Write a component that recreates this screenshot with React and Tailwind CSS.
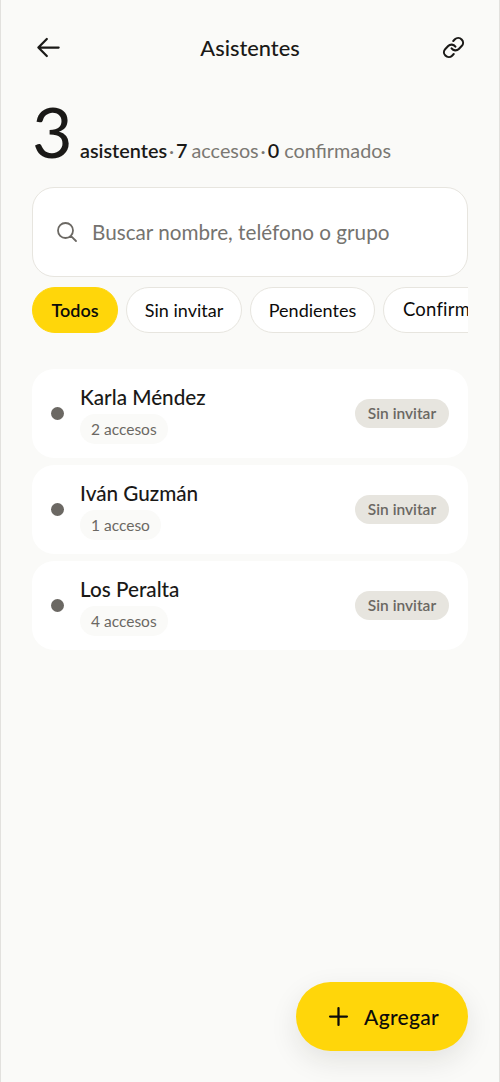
import { useState } from 'react';
import { Link } from 'lucide-react';
import { HiOutlineArrowLeft, HiOutlineMagnifyingGlass, HiOutlinePlus } from 'react-icons/hi2';

const filters = [
    { label: 'Todos', className: 'w-[86px] text-[18px]' },
    { label: 'Sin invitar', className: 'w-[116px] text-[18px]' },
    { label: 'Pendientes', className: 'w-[125px] text-[18px]' },
    { label: 'Confirmados', className: 'px-[19px] text-[18.5px] tracking-[0.2px]' },
];

const guests = [
    { id: 1, name: 'Karla Méndez', accesos: 2, status: 'Sin invitar' },
    { id: 2, name: 'Iván Guzmán', accesos: 1, status: 'Sin invitar' },
    { id: 3, name: 'Los Peralta', accesos: 4, status: 'Sin invitar' },
];

const GuestCard = ({ guest }) => (
    <li className="flex h-[89px] items-center rounded-[22px] bg-white px-[19px]">
        <span className="size-[13px] shrink-0 rounded-full bg-[#6b6863]"></span>
        <div className="ml-4 flex flex-1 flex-col items-start">
            <p className="text-[20.7px] leading-[26px] font-medium">{guest.name}</p>
            <span className="mt-1 flex h-[30px] items-center rounded-full bg-[#fafaf8] px-[11px] pt-0.5 text-[15.5px] text-[#6b6863]">
                {guest.accesos} {guest.accesos === 1 ? 'acceso' : 'accesos'}
            </span>
        </div>
        <span className="flex h-[29px] w-[94px] items-center justify-center rounded-full bg-[#e7e5df] pt-px text-[15.5px] font-semibold text-[#6b6863]">
            {guest.status}
        </span>
    </li>
);

const App = () => {
    const [active, setActive] = useState('Todos');
    const [query, setQuery] = useState('');

    const visible = guests.filter((g) => g.name.toLowerCase().includes(query.toLowerCase()));

    return (
        <div className="relative flex h-[1082px] flex-col border-x border-[#e2e1de] bg-[#fafaf8] px-[31px] font-[Lato,'Open_Sans',sans-serif] text-[#1a1917]">
            {/* Header */}
            <header className="flex h-[94px] items-center justify-between px-[3px]">
                <button aria-label="Volver">
                    <HiOutlineArrowLeft className="size-[27px]" strokeWidth="2" />
                </button>
                <h1 className="pt-0.5 pr-1 text-[21.8px] font-medium">Asistentes</h1>
                <button aria-label="Copiar enlace">
                    <Link className="size-[23px]" strokeWidth={2.2} />
                </button>
            </header>

            {/* Totals */}
            <div className="flex h-[73px] items-baseline gap-[11px]">
                <span className="w-[37px] text-[70px] leading-[74px]">3</span>
                <p className="flex items-baseline text-[19.8px] whitespace-nowrap text-[#7a7873]">
                    <span className="font-semibold text-[#1a1917]">asistentes</span>
                    <span className="w-[9px] text-center">·</span>
                    <span className="mr-1 font-semibold text-[#1a1917]">7</span>
                    <span>accesos</span>
                    <span className="w-[9px] text-center">·</span>
                    <span className="mr-[5px] font-semibold text-[#1a1917]">0</span>
                    <span>confirmados</span>
                </p>
            </div>

            {/* Search */}
            <label className="mt-5 flex h-[90px] shrink-0 items-center rounded-[22px] border border-[#e7e5df] bg-white px-[22px]">
                <HiOutlineMagnifyingGlass className="size-[24px] shrink-0 text-[#6b6863]" strokeWidth="1.8" />
                <input
                    value={query}
                    onChange={(e) => setQuery(e.target.value)}
                    placeholder="Buscar nombre, teléfono o grupo"
                    className="ml-[13px] flex-1 pt-0.5 text-[20.7px] outline-none placeholder:text-[#75736f]"
                />
            </label>

            {/* Filters */}
            <div className="mt-[10px] flex shrink-0 gap-2 overflow-hidden">
                {filters.map((f) => (
                    <button
                        key={f.label}
                        onClick={() => setActive(f.label)}
                        className={`h-[46px] shrink-0 rounded-full border text-[#0c0b0a] ${f.className} ${
                            active === f.label
                                ? 'border-[#ffd60a] bg-[#ffd60a] font-semibold'
                                : 'border-[#e7e5df] bg-white'
                        }`}
                    >
                        {f.label}
                    </button>
                ))}
            </div>

            <ul className="mt-9 flex flex-col gap-[7px]">
                {visible.map((g) => (
                    <GuestCard key={g.id} guest={g} />
                ))}
            </ul>

            {/* Floating action */}
            <button className="absolute right-[31px] bottom-[31px] flex h-[69px] w-[172px] items-center justify-center gap-3 rounded-full bg-[#ffd60a] text-[21px] font-medium tracking-[0.3px] text-[#0c0b0a] shadow-[0_10px_28px_rgba(26,25,23,0.10)]">
                <HiOutlinePlus className="size-[27px]" strokeWidth="2" />
                Agregar
            </button>
        </div>
    );
};

export default App;
